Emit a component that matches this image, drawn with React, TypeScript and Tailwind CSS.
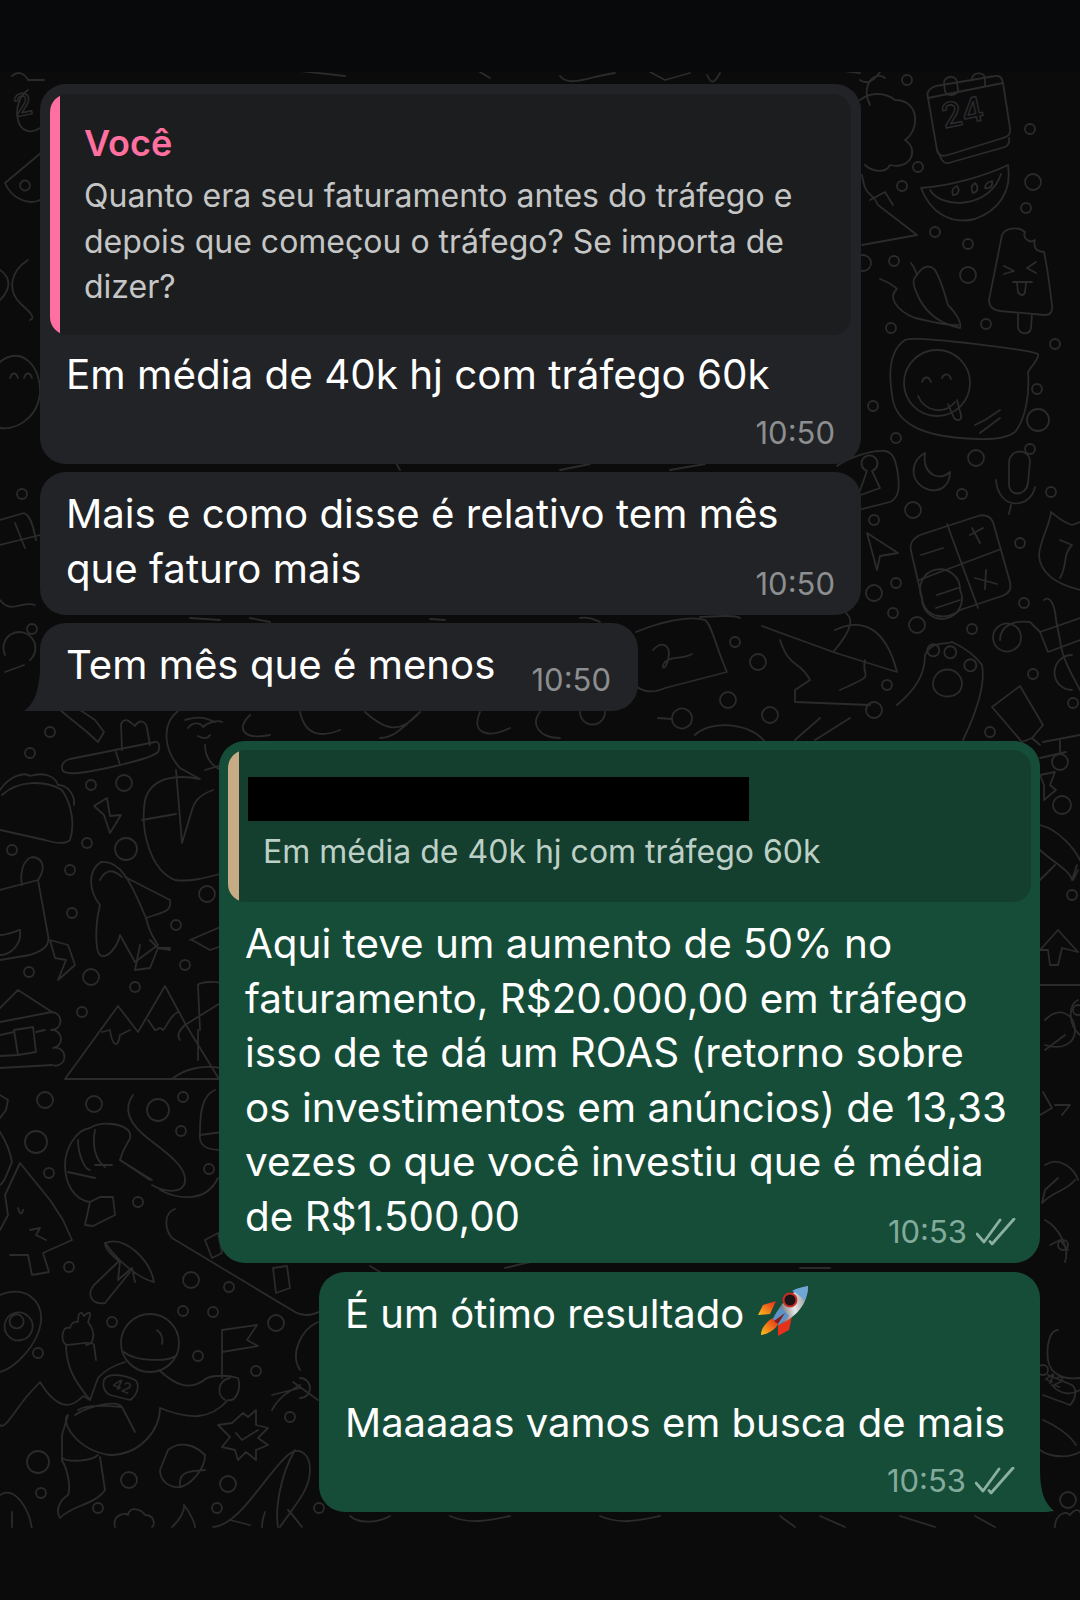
const dots: [number, number, number][] = [
  [907, 80, 5], [1030, 129, 5], [918, 167, 5], [902, 186, 5], [1033, 182, 8], [1026, 208, 5], [935, 232, 5], [968, 244, 5],
  [863, 263, 8], [894, 261, 5], [968, 275, 8], [986, 324, 5], [891, 328, 5], [1055, 344, 5], [1037, 389, 5], [873, 406, 5],
  [1038, 420, 11], [896, 438, 5], [1030, 449, 5], [976, 458, 8], [962, 494, 5], [1051, 492, 5], [913, 510, 8], [874, 520, 5],
  [1020, 543, 5], [896, 583, 5], [874, 593, 8], [893, 613, 5], [917, 625, 8], [972, 629, 5], [1024, 603, 5], [735, 642, 5],
  [758, 662, 8], [728, 700, 8], [770, 715, 8], [887, 685, 5], [874, 710, 8], [1033, 674, 5], [1073, 703, 5], [990, 732, 5],
  [22, 494, 5], [32, 629, 5], [50, 732, 5], [30, 753, 5], [91, 785, 5], [124, 783, 8], [87, 843, 5], [126, 849, 11],
  [12, 850, 5], [70, 870, 5], [72, 913, 5], [176, 925, 5], [207, 894, 8], [185, 965, 5], [29, 972, 5], [91, 977, 8],
  [135, 987, 5], [82, 1012, 5], [45, 1100, 8], [94, 1104, 8], [183, 1097, 5], [158, 1110, 11], [181, 1131, 5], [36, 1142, 11],
  [209, 1169, 5], [49, 1173, 5], [138, 1202, 5], [69, 1267, 5], [191, 1280, 8], [229, 1287, 5], [183, 1311, 5], [213, 1312, 5],
  [276, 1323, 8], [112, 1322, 5], [38, 1353, 5], [198, 1356, 5], [256, 1371, 5], [290, 1417, 5], [38, 1462, 11], [129, 1480, 8],
  [228, 1484, 8], [41, 1493, 5], [98, 1508, 5], [217, 1508, 5], [319, 1508, 5], [1063, 1245, 5], [1043, 1370, 5], [1068, 1500, 8],
  [1078, 1010, 5], [1072, 895, 5], [1060, 762, 8], [1062, 805, 9],
]

const lines: string[] = [
  // calendar + volcano tree, top right
  "M928 98 C926 92 930 88 936 86 L995 76 C1000 75 1002 78 1003 83 L1010 128 C1011 134 1008 137 1003 138 L948 155 C942 157 938 155 937 150 Z",
  "M928 98 L1003 83 M944 84 C943 76 956 74 957 82 L958 90 C958 96 946 97 945 91 Z M972 80 C971 72 984 71 985 78 L985 86",
  "M937 150 L942 160 C944 163 948 164 952 162 L1005 147 C1008 146 1010 142 1009 138",
  "M921 188 C950 186 985 176 1008 165 C1012 190 1000 210 975 219 C950 225 930 212 921 188 Z M930 190 C942 210 990 208 1001 174",
  "M953 195 C951 190 954 187 957 186 C960 190 959 195 953 195 Z M973 193 C970 188 972 185 975 183 C979 187 978 192 973 193 Z M985 188 C985 184 988 182 992 181 C993 186 990 189 985 188 Z",
  "M870 105 C860 85 875 70 885 78 M860 100 C870 92 885 92 895 100 C920 100 920 130 905 140 C920 150 910 170 890 165 C885 175 870 170 865 165",
  "M862 175 C866 200 872 190 878 205 L917 235 L862 245 M870 200 L885 192 L893 205",
  // popsicle and chilies
  "M1002 235 C1005 228 1018 226 1025 232 C1022 238 1030 244 1035 240 C1032 250 1040 252 1044 252 C1048 270 1050 290 1052 305 C1053 312 1050 315 1045 315 L1000 311 C993 310 989 306 989 300 Z",
  "M1018 313 L1018 328 C1020 335 1030 335 1031 328 L1032 314 M1004 266 L1014 271 L1004 274 M1036 262 L1027 268 L1036 273 M1013 282 L1032 282 M1017 283 L1018 292 C1020 296 1024 296 1025 292 L1026 283",
  "M911 263 C915 268 916 272 917 275 C910 280 915 290 920 300 C930 318 945 325 960 328 C962 322 955 312 948 305 C945 295 942 282 935 270 C930 264 922 266 917 275",
  "M880 279 C888 282 893 285 897 289 C888 296 895 310 915 318 C925 320 945 326 958 325",
  // avocado smiley
  "M905 340 C915 335 1030 350 1038 354 C1040 358 1030 368 1028 372 C1030 395 1025 420 1015 432 C1005 440 985 440 960 438 C925 435 895 425 892 395 C888 370 890 350 905 340 Z",
  "M970 383 A33 33 0 1 1 904 383 A33 33 0 1 1 970 383 Z M918 396 C925 412 945 415 955 402 M922 382 C924 376 929 376 931 382 M942 378 C944 373 949 373 951 379 M948 404 L954 418 C958 422 962 420 961 415 L957 400",
  "M975 425 L985 420 L1000 410 M980 433 L1000 418",
  // lock box, moon, mic
  "M837 466 C848 458 870 450 885 451 C893 452 896 460 898 475 C900 490 898 498 890 502 L850 512",
  "M867 471 A8 8 0 1 1 872 471 L880 488 L858 496 Z",
  "M925 453 C908 462 910 485 930 490 C942 492 950 484 950 472 C940 482 922 475 925 453 Z",
  "M1009 462 C1010 448 1030 448 1030 462 L1028 483 C1026 497 1008 497 1009 483 Z M996 480 C998 510 1030 510 1035 487 M1011 505 L1009 514",
  // send arrow, calculator, cat
  "M867 533 L898 553 L880 556 L877 570 Z",
  "M911 551 C909 542 914 538 920 535 L978 516 C985 514 990 516 993 522 L1010 582 C1012 590 1008 594 1002 596 L960 610 C950 620 925 620 922 598 Z",
  "M947 524 L978 608 M919 580 L1001 549 M921 555 L943 548 M970 535 L983 528 M972 528 L980 543 M975 578 L997 584 M986 570 L985 589",
  "M922 598 A20 20 0 1 0 960 590 A20 20 0 1 0 922 598 Z M937 595 L958 588 M936 608 L960 600",
  "M1051 512 C1055 515 1062 522 1072 525 L1080 522 M1051 512 C1050 525 1040 540 1039 555 C1040 575 1060 585 1080 590 M1060 540 L1072 545 C1062 555 1068 565 1060 578",
  // scissors, paw, tube
  "M1000 640 C1000 625 1015 620 1030 622 L1040 632 L1080 618 M1021 637 A14 14 0 1 0 1021 638 M1040 632 L1048 652 L1080 640 M1044 600 C1050 595 1055 605 1056 620 L1060 640 C1062 660 1075 680 1080 690",
  "M1072 655 A16 16 0 1 0 1072 690",
  "M897 705 C915 690 925 675 925 655 C932 640 945 645 952 642 C965 648 975 655 982 665 C986 685 975 715 963 740",
  "M938 654 A6 6 0 1 0 937 655 M955 656 A6 6 0 1 0 954 657 M975 669 A6 6 0 1 0 974 670 M962 683 C960 665 935 665 933 683 C932 700 962 702 962 683 Z",
  "M992 707 L1020 686 L1043 725 L1032 738 L1040 745 M992 707 L1022 742 L1032 738",
  // note and hat figure
  "M636 632 C660 622 690 615 705 620 C712 625 715 645 727 672 L665 688 C650 695 640 690 635 685",
  "M653 650 C662 640 672 645 668 660 C665 672 660 668 665 662 C672 655 682 660 692 654",
  "M762 626 L836 653 M838 607 C850 615 860 620 834 651 M835 630 C860 618 885 625 897 672 L836 653",
  "M780 640 C790 670 800 660 810 680 L795 690 L795 702 L870 705 M865 660 C860 680 880 672 840 690",
  "M672 718 A10 10 0 1 1 672 719 L658 718",
  "M695 735 C710 720 750 722 765 742 M795 740 L820 718 M815 740 L850 718",
  // top row partials
  "M12 76 C18 70 25 74 28 80 L44 80 M28 90 C20 95 15 108 18 120 C20 130 30 135 40 128",
  "M42 152 L5 183 C12 200 30 205 40 200 M30 185 A5 5 0 1 0 30 186",
  "M28 260 C12 270 5 290 22 305 C30 312 36 318 30 320 M0 270 C14 280 8 292 0 300",
  "M0 362 C20 345 42 365 40 395 C36 420 15 430 0 428 M10 378 C12 372 16 372 18 378 M24 378 C26 372 30 372 32 378",
  "M0 520 L24 513 C30 515 33 525 36 540 M0 545 L40 535 M15 523 L25 548",
  "M0 600 C12 615 22 600 35 605 M5 655 A16 16 0 1 1 30 660 M5 672 L24 665",
  // toothbrush, taco, bolt, figure, shuttle, bag
  "M60 710 L87 732 L98 742 L104 732 L95 720 L80 710",
  "M62 768 C62 762 66 760 70 759 L155 742 C160 741 160 748 158 752 C150 760 80 775 70 773 C65 773 62 772 62 768 Z M116 752 L120 765",
  "M122 750 L121 724 C125 716 130 722 135 726 C140 718 146 722 147 728 L150 745",
  "M2 795 C18 780 45 780 62 790 C72 805 75 825 70 840 C65 845 55 843 45 840 L0 830",
  "M0 790 C10 775 25 772 30 776 C42 772 55 775 58 785 C68 785 75 795 74 805",
  "M94 806 L107 798 L110 816 L121 815 L110 833 L104 815 Z",
  "M178 711 C160 725 165 752 180 768 L200 779 C180 775 152 775 145 800 C140 830 150 870 175 880 C190 882 205 878 220 874",
  "M176 770 L182 843 L192 810 C195 800 200 795 213 790 M142 820 L176 814 M205 770 L222 765",
  "M185 720 C192 718 200 715 215 722 M188 728 C192 722 200 722 203 727 C208 722 218 720 222 722 M198 736 C205 740 208 738 210 735 M205 745 C205 760 215 768 222 770",
  "M101 862 C88 870 88 890 100 905 C95 925 95 950 100 955 C108 960 118 945 120 935 L135 962 M125 877 L170 900 C172 910 165 912 155 915 L146 918",
  "M101 862 C120 860 130 880 146 918 C150 935 155 940 158 945 L135 962 M100 880 C105 870 112 868 122 877",
  "M140 945 L135 970 L150 968 L158 948 L170 950 M150 940 L158 948 L170 948",
  "M0 890 L38 880 C45 870 45 858 32 857 C22 860 20 875 22 885 M38 880 L48 935 C50 945 45 950 30 955 L0 960",
  "M0 935 C8 935 18 930 20 930 C22 945 10 955 0 955",
  "M50 940 L68 945 L75 965 L58 980 L66 960 L55 958 Z",
  "M190 940 L225 925 M192 940 L210 950 L225 945",
  // cabin, mountains, snowman, snake, shrimp
  "M0 1008 L18 990 L52 1012 M0 1022 L52 1012 M52 1012 A9 9 0 1 1 51 1030 A9 9 0 1 1 53 1048 A9 9 0 1 1 52 1065 L0 1068",
  "M14 1030 L33 1027 L36 1052 L18 1055 Z M0 1035 L14 1032 M36 1032 L45 1030 M0 1056 L18 1055",
  "M65 1079 L118 1006 L138 1032 L165 986 L186 1025 L219 1079 Z",
  "M102 1032 L110 1030 C112 1045 118 1050 120 1035 L130 1030 M148 1020 L155 1030 C160 1030 158 1025 163 1030 C165 1030 170 1015 178 1012",
  "M200 1030 L198 985 C197 982 222 980 222 985 M180 1040 C176 1035 180 1030 185 1025 L222 1002 M172 1079 C185 1068 205 1065 220 1068 M198 1060 L198 1030",
  "M133 1095 C122 1110 130 1125 150 1140 C170 1155 190 1170 184 1185 C178 1195 160 1190 152 1185 M160 1190 C175 1198 205 1205 218 1178",
  "M150 1180 L120 1160 C125 1140 135 1140 128 1130 C118 1122 100 1122 90 1128 C75 1130 65 1150 65 1165 C65 1185 75 1200 90 1202 L85 1225 L93 1226 L115 1215 L113 1197 L100 1197 L90 1202",
  "M95 1130 C92 1145 95 1160 105 1167 M78 1140 C78 1155 85 1170 90 1170 M68 1172 L95 1178 M120 1160 L152 1180 M95 1165 L112 1165",
  "M215 1090 C203 1095 200 1110 200 1132 C198 1145 205 1150 222 1150 M200 1135 L222 1132",
  "M20 1163 L50 1200 L63 1220 L72 1240 L43 1253 L49 1272 L32 1275 L28 1255 L10 1255 M20 1163 L5 1195 L8 1215 L0 1230",
  "M18 1208 C20 1215 22 1215 23 1210 M30 1230 L40 1228 L36 1235 L46 1240",
  // lower left doodles
  "M0 1132 C5 1140 10 1150 12 1162 C8 1170 5 1183 0 1185 M0 1095 L8 1100 L6 1110 L0 1118",
  "M105 1243 C125 1235 150 1260 154 1282 C145 1280 125 1270 105 1243 Z M105 1243 C105 1250 115 1258 120 1262 L118 1280 L132 1268 L135 1282",
  "M118 1262 L94 1285 C86 1295 92 1305 105 1303 L130 1272",
  "M0 1295 C25 1285 43 1300 41 1322 C38 1345 15 1368 0 1372 M29 1317 A14 14 0 1 1 28 1316 M22 1317 A7 7 0 1 1 21 1316",
  "M175 1209 C163 1213 165 1230 172 1238 L295 1312 C305 1318 318 1314 325 1308",
  "M205 1240 L218 1233 L222 1253 L212 1258 Z M273 1268 L287 1266 L290 1288 L276 1293 Z",
  "M179 1343 A29 29 0 1 1 121 1343 A29 29 0 1 1 179 1343 Z M124 1352 C135 1362 170 1362 177 1355 M157 1330 C163 1335 163 1340 162 1344",
  "M125 1362 C115 1365 105 1370 98 1378 L90 1400 L83 1396 C75 1405 60 1415 40 1382 L28 1395 C15 1410 5 1430 0 1425",
  "M66 1345 C66 1370 78 1385 90 1400 M66 1345 C75 1345 92 1340 94 1345 L96 1360 M66 1345 C60 1340 62 1325 70 1328 C72 1320 78 1322 78 1322 C78 1310 82 1312 84 1316 C90 1310 92 1312 88 1322 C98 1335 92 1345 86 1345",
  "M159 1370 C175 1385 190 1392 207 1378 C215 1375 228 1375 238 1378 C242 1390 235 1402 228 1400 C210 1420 190 1420 160 1408 M160 1408 C160 1430 140 1455 110 1455 C75 1450 60 1420 68 1415 L62 1435 L62 1460",
  "M122 1407 C100 1405 85 1405 78 1410 M135 1432 L122 1407 C118 1400 90 1405 75 1415 M62 1458 C68 1462 90 1462 98 1455 M62 1460 C70 1475 70 1490 68 1495 C60 1500 55 1510 60 1518 C72 1505 95 1505 105 1490 L100 1457",
  "M104 1380 C108 1372 125 1375 135 1380 C140 1384 138 1395 130 1400 L110 1395 C104 1392 102 1385 104 1380 Z",
  "M222 1378 L222 1330 L257 1325 L247 1340 L258 1346 L222 1352",
  "M230 1378 C218 1380 216 1395 225 1400",
  "M243 1413 L248 1417 L256 1410 L256 1425 L268 1428 L258 1438 L268 1445 L256 1450 L256 1460 L246 1452 L238 1460 L235 1450 L222 1447 L230 1437 L218 1425 L232 1423 Z M236 1433 L242 1440 L258 1430",
  "M168 1450 C180 1440 195 1445 205 1455 C205 1470 190 1485 180 1487 C168 1488 160 1480 160 1470 Z M180 1487 C178 1470 190 1472 205 1470",
  "M0 1495 C15 1485 30 1510 32 1530 M12 1512 L12 1527",
  "M115 1527 C112 1515 125 1512 128 1515 C130 1505 142 1510 145 1515 C155 1515 155 1525 152 1527",
  "M172 1527 C180 1520 185 1510 184 1505 C192 1515 195 1525 195 1527",
  "M213 1527 C240 1525 265 1475 288 1455 C300 1445 310 1455 310 1470 C310 1490 295 1505 280 1527 M295 1450 C280 1475 275 1510 278 1527 M262 1527 C262 1520 264 1515 265 1512",
  "M302 1527 C295 1518 290 1512 288 1510",
  "M272 1410 C280 1395 292 1390 300 1385 M300 1378 A10 10 0 1 1 300 1398 M272 1395 L300 1388 M318 1400 L293 1382",
  "M318 1322 C300 1330 290 1355 300 1370",
  // right strip
  "M1043 742 L1080 735 M1040 758 L1066 752 M1060 740 L1060 752 M1040 775 L1055 772 L1050 785 L1056 790 L1044 800 L1044 785 Z",
  "M1040 825 C1060 830 1075 850 1080 860 M1040 850 C1050 860 1070 870 1072 880 L1077 865 M1040 880 L1055 865 M1078 870 L1073 880",
  "M1040 950 L1058 930 L1078 952 L1062 948 L1058 965 L1050 965 L1048 950 Z M1040 985 L1080 985 M1078 1000 C1068 1005 1068 1025 1080 1035",
  "M1045 1020 C1060 1005 1075 1015 1075 1030 C1075 1045 1060 1050 1045 1045 M1045 1050 L1065 1035",
  "M1043 1092 L1052 1108 L1040 1115 M1055 1105 L1070 1105 L1062 1115",
  "M1045 1165 C1060 1155 1075 1170 1078 1180 M1058 1178 L1045 1190 L1042 1203 C1055 1190 1065 1192 1075 1180",
  "M1045 1220 C1060 1228 1070 1250 1065 1262 M1050 1245 L1060 1240 L1068 1250",
  "M1058 1330 C1050 1330 1046 1345 1048 1360 C1050 1375 1065 1380 1080 1378 M1052 1385 C1060 1395 1072 1395 1080 1390 M1043 1395 L1070 1405 C1075 1400 1078 1390 1072 1385 L1048 1375",
  "M1043 1420 C1055 1425 1070 1435 1076 1445 M1040 1450 C1050 1458 1070 1458 1080 1452",
  "M1055 1527 C1055 1515 1065 1510 1070 1515 C1075 1508 1080 1510 1080 1512",
  // bits seen between bubbles
  "M300 71 L345 76 M560 76 C570 88 590 76 615 73 M720 73 C715 82 712 86 707 75 M400 470 L396 463 M560 470 L590 464 M670 470 L705 464 M190 618 L220 620",
  "M580 618 C590 616 595 620 600 622 M250 618 L270 622 M430 619 L445 620 M700 617 C720 616 735 615 740 618",
  "M300 712 C305 735 320 738 340 730 M250 715 C235 730 245 740 270 735 M365 712 C385 730 400 735 420 712 M420 712 C405 725 395 738 380 738",
  "M480 712 C470 735 490 738 510 728 M540 712 C530 725 540 738 560 738 M580 712 A12 12 0 1 0 605 712",
  "M860 80 C870 88 880 72 880 72 M835 70 L860 73 M480 72 L490 78 M650 72 L665 80 L690 73",
  "M370 1266 L380 1272 M505 1268 L530 1262 M800 1268 L830 1268",
  "M230 1520 L250 1525 M350 1516 C360 1525 380 1522 390 1516 M450 1516 C470 1525 490 1520 510 1516 M600 1516 C620 1525 640 1520 660 1516 M780 1516 L795 1527 M820 1516 L845 1527 M900 1516 L935 1527 M975 1516 L995 1527",
]

function Doodles() {
  return (
    <svg className="absolute top-0 left-0 w-[1080px] h-[1600px]" viewBox="0 0 1080 1600" fill="none" stroke="#2b2b2c" strokeWidth="1.8" strokeLinecap="round" strokeLinejoin="round">
      <defs>
        <clipPath id="band">
          <rect x="0" y="72" width="1080" height="1456" />
        </clipPath>
      </defs>
      <g clipPath="url(#band)">
        {dots.map(([cx, cy, r], i) => (
          <circle key={i} cx={cx} cy={cy} r={r} />
        ))}
        {lines.map((d, i) => (
          <path key={i} d={d} />
        ))}
        <g fill="#2b2b2c" stroke="none" fontFamily="Inter, sans-serif" fontWeight="500">
          <text x="965" y="124" fontSize="34" fill="none" stroke="#2b2b2c" strokeWidth="1.4" transform="rotate(-12 965 124)" textAnchor="middle">24</text>
          <text x="120" y="1391" fontSize="15" transform="rotate(22 120 1391)" textAnchor="middle">42</text>
          <text x="1052" y="1385" fontSize="15" transform="rotate(22 1052 1385)" textAnchor="middle">42</text>
          <text x="25" y="115" fontSize="30" fill="none" stroke="#2b2b2c" strokeWidth="1.4" transform="rotate(-12 25 115)" textAnchor="middle">2</text>
        </g>
      </g>
    </svg>
  )
}

function Time({ t, green }: { t: string; green?: boolean }) {
  return (
    <span className={`text-[31px] leading-[34px] whitespace-nowrap ${green ? "text-[#83ab9b]" : "text-[#8d8e90]"}`}>{t}</span>
  )
}

function Checks() {
  return (
    <svg className="w-[40px] h-[28px] ml-[9px]" viewBox="0 0 40 28" fill="none" stroke="#8cb0a1" strokeWidth="2.8" strokeLinecap="round" strokeLinejoin="round">
      <path d="M1 16 L8 24 L24 2" />
      <path d="M14 23.5 L16 26 L38 1" />
    </svg>
  )
}

function Rocket() {
  return (
    <svg className="inline-block w-[52px] h-[54px] ml-[14px] align-[-10px]" viewBox="0 0 52 54">
      <defs>
        <linearGradient id="hull" x1="0.2" y1="0.8" x2="1" y2="0.6">
          <stop offset="0" stopColor="#5f6265" />
          <stop offset="0.55" stopColor="#e6e7e8" />
          <stop offset="1" stopColor="#9aa0a4" />
        </linearGradient>
        <linearGradient id="flame" x1="1" y1="0" x2="0" y2="1">
          <stop offset="0" stopColor="#e8241a" />
          <stop offset="1" stopColor="#f9c21a" />
        </linearGradient>
      </defs>
      <path d="M18 17 L5 21 L0 31 L12 30 Z" fill="url(#flame)" />
      <path d="M34 32 L31 46 L20 52 L20 41 Z" fill="#e5301c" />
      <path d="M15 34 C9 37 3 44 3 51 C10 50 17 46 21 39 Z" fill="url(#flame)" />
      <path d="M15 35 C21 22 33 6 50 2 C50 20 38 33 21 41 Z" fill="url(#hull)" />
      <path d="M34 7 C39 4 45 3 50 2 C50 7 49 12 46 17 C43 12 39 9 34 7 Z" fill="#6ea6d8" />
      <path d="M15 35 C17 30 20 26 23 23 L31 32 C28 35 25 38 21 41 Z" fill="#5c93c9" />
      <path d="M16 37 L27 29 L20 40 Z" fill="#8c1a17" />
      <circle cx="32" cy="16" r="6.5" fill="#1b1416" stroke="#cf2a22" strokeWidth="2" />
    </svg>
  )
}

export default function App() {
  return (
    <div className="relative w-[1080px] h-[1600px] overflow-hidden bg-[#0b0b0c] text-white" style={{ fontFamily: "Inter, 'Noto Sans', sans-serif" }}>
      <div className="absolute top-0 left-0 w-full h-[72px] bg-[#08090a]" />
      <Doodles />
      <div className="relative flex flex-col pt-[84px] pl-[40px] pr-[40px]">
        <div className="w-[821px] h-[380px] rounded-[26px] bg-[#212326] p-[10px]">
          <div className="flex h-[241px] rounded-[18px] bg-[#1c1d1f] overflow-hidden">
            <div className="w-[10px] bg-[#ff6f9f]" />
            <div className="pt-[27px] pl-[24px]">
              <div className="text-[36px] leading-[44px] font-semibold text-[#ff6f9f]">Você</div>
              <div className="mt-[8px] text-[32px] leading-[45.5px] text-[#c5c6c6]">
                Quanto era seu faturamento antes do tráfego e<br />depois que começou o tráfego? Se importa de<br />dizer?
              </div>
            </div>
          </div>
          <div className="mt-[12px] ml-[16px] text-[40.4px] leading-[55px]">Em média de 40k hj com tráfego 60k</div>
          <div className="mt-[14px] mr-[16px] flex justify-end"><Time t="10:50" /></div>
        </div>

        <div className="mt-[8px] w-[821px] h-[143px] rounded-[26px] bg-[#212326] pt-[14px] px-[26px] flex justify-between">
          <div className="shrink-0 whitespace-nowrap text-[40.2px] leading-[55px]">Mais e como disse é relativo tem mês<br />que faturo mais</div>
          <div className="self-end mb-[14px] -ml-[40px]"><Time t="10:50" /></div>
        </div>

        <div className="relative mt-[8px] w-[598px] h-[88px] rounded-[26px] rounded-bl-none bg-[#212326] pl-[26px] pr-[27px] flex justify-between">
          <svg className="absolute left-[-16px] bottom-0 w-[24px] h-[40px]" viewBox="0 0 24 40"><path d="M16 0 L24 0 L24 40 L0 40 C8 34 14 26 16 0 Z" fill="#212326" /></svg>
          <div className="pt-[14px] text-[40.2px] leading-[55px]">Tem mês que é menos</div>
          <div className="self-end mb-[14px]"><Time t="10:50" /></div>
        </div>

        <div className="self-end mt-[30px] w-[821px] h-[522px] rounded-[26px] bg-[#164d39] p-[9px]">
          <div className="flex h-[152px] rounded-[18px] bg-[#143f2e] overflow-hidden">
            <div className="w-[11px] bg-[#c7ab85]" />
            <div className="pt-[27px] pl-[9px]">
              <div className="w-[501px] h-[44px] bg-black" />
              <div className="mt-[10px] ml-[15px] text-[32px] leading-[42px] text-[#bdd0c7]">Em média de 40k hj com tráfego 60k</div>
            </div>
          </div>
          <div className="mt-[15px] ml-[17px] text-[40.4px] leading-[54.5px]">
            Aqui teve um aumento de 50% no<br />faturamento, R$20.000,00 em tráfego<br />isso de te dá um ROAS (retorno sobre<br />os investimentos em anúncios) de 13,33<br />vezes o que você investiu que é média<br />de R$1.500,00
          </div>
          <div className="-mt-[29px] mr-[15px] flex justify-end items-center"><Time t="10:53" green /><Checks /></div>
        </div>

        <div className="relative self-end mt-[9px] w-[721px] h-[240px] rounded-[26px] rounded-br-none bg-[#164d39] pt-[12px] pl-[26px]">
          <svg className="absolute right-[-14px] bottom-0 w-[30px] h-[44px]" viewBox="0 0 30 44"><path d="M0 0 L16 0 C16 24 20 34 30 43 L22 44 L0 44 Z" fill="#164d39" /></svg>
          <div className="text-[40px] leading-[54.5px]">
            <div className="h-[54.5px]">É um ótimo resultado<Rocket /></div>
            <div className="h-[57.5px]" />
            <div>Maaaaas vamos em busca de mais</div>
          </div>
          <div className="mt-[13px] mr-[25px] flex justify-end items-center"><Time t="10:53" green /><Checks /></div>
        </div>
      </div>
    </div>
  )
}
